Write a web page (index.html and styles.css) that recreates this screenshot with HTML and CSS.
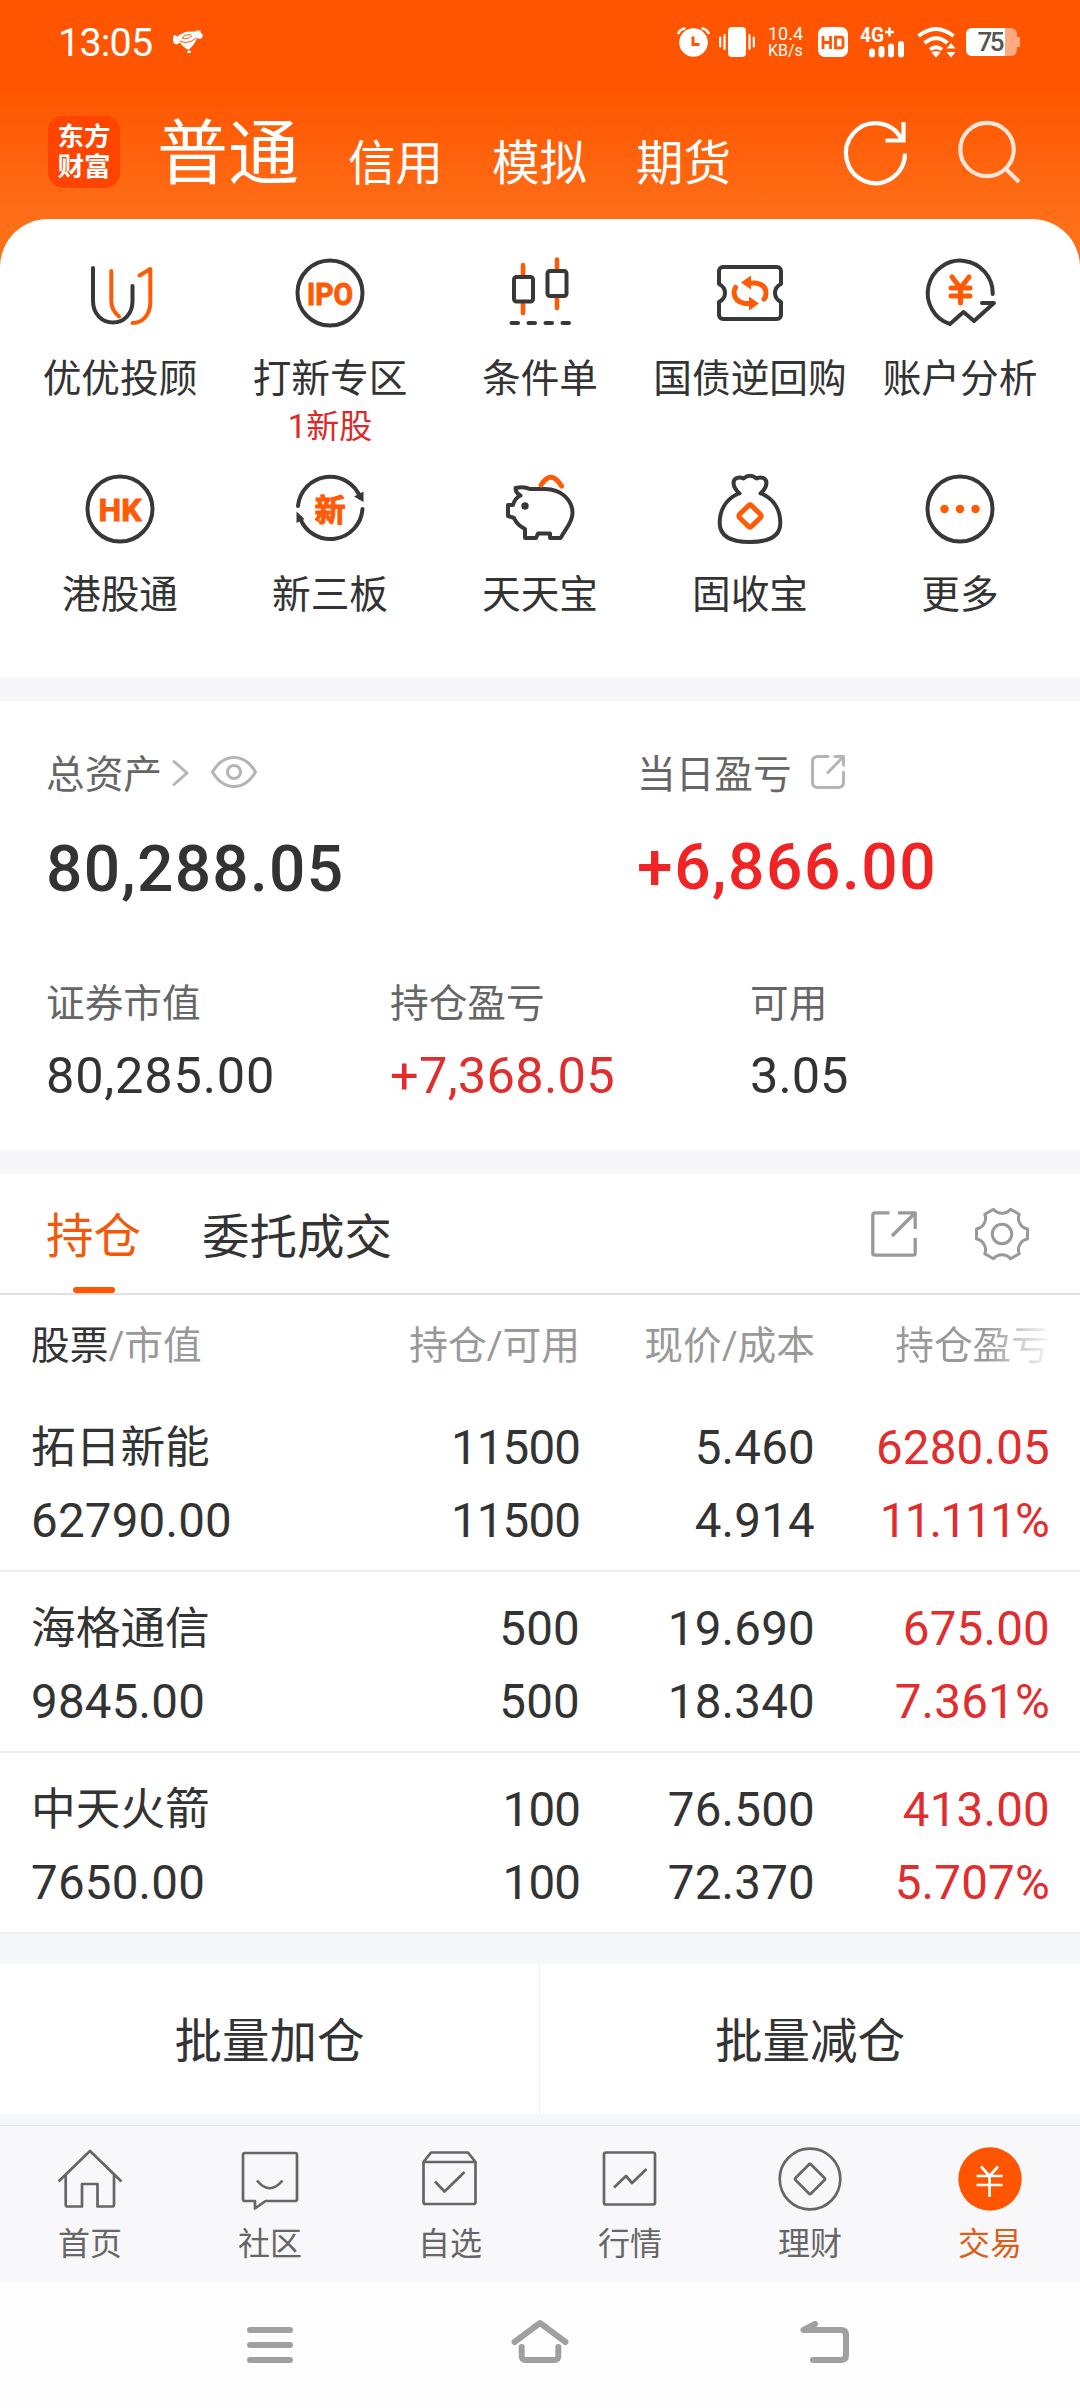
FILE: index.html
```html
<!DOCTYPE html>
<html lang="zh-CN">
<head>
<meta charset="utf-8">
<title>东方财富 - 交易</title>
<link rel="stylesheet" href="styles.css">
</head>
<body>
<div class="hero">
  <div class="status">
    <span class="clock">13:05</span>
    <svg class="notice" width="30" height="24" viewBox="0 0 30 24"><path fill="#fff" d="M0 7l1-2 2 0 1 2Q9 2 16 1.500l7 0 1-1.500 2 1 1-1 1 3 2 2-1 3-2 1-3-1Q22 14 17 18.500l-1 1.500 2 1v2h-4l1-3Q9 16 7 12.500l-3 2-3-1-1-3z"/><path d="M9 8q2-3.500 8-3.500 3 1.500-1 3.500-5 1.500-7 0M7 11q8 4 16-3M14 20h4" fill="none" stroke="#ff5a05" stroke-width="1"/></svg>
    <div class="status-right">
      <svg width="33" height="30" viewBox="0 0 33 30"><circle cx="16.500" cy="15.500" r="14.300" fill="#fff"/><path d="M1.500 6Q3 2.500 7.500 1.500M31.500 6Q30 2.500 25.500 1.500" fill="none" stroke="#fff" stroke-width="2.600" stroke-linecap="round"/><path d="M16 9.500V17.500H22.500" fill="none" stroke="#ff5500" stroke-width="3"/></svg>
      <svg class="vibrate" width="36" height="30" viewBox="0 0 36 30"><rect x="9" width="18" height="30" rx="4" fill="#fff"/><path d="M1.200 10.500v9M5.500 8v14M30.500 8v14M34.800 10.500v9" stroke="#fff" stroke-width="2.200" stroke-linecap="round"/></svg>
      <span class="speed"><span>10.4</span><span class="unit">KB/s</span></span>
      <svg class="hd" width="30" height="30" viewBox="0 0 30 30"><rect width="30" height="30" rx="7" fill="#fff"/><path d="M5 9v13M12.500 9v13M5 15.500h7.500M17.500 10.200h5.500q2 0 2 2v6.600q0 2-2 2h-5.500z" fill="none" stroke="#ff5500" stroke-width="2.800"/></svg>
      <svg class="signal" width="45" height="31" viewBox="0 0 45 31"><text class="net" x="0" y="15" textLength="24" lengthAdjust="spacingAndGlyphs">4G</text><path d="M25 5h9M29.500 .5v9" stroke="#fff" stroke-width="2.600"/><path d="M12 24.500v3M21.500 22v5.500M31 19.500v8M41 17v10.500" stroke="#fff" stroke-width="6" stroke-linecap="round"/></svg>
      <svg class="wifi" width="39" height="31" viewBox="0 0 39 31"><path d="M1.500 9Q19 -5 36.500 9M7.500 16Q19 6.500 30.500 16M13 22.500Q19 18 25 22.500" fill="none" stroke="#fff" stroke-width="4"/><path d="M14.500 25.500Q19 22.500 23.500 25.500L19 30.500zM29.500 21.500L34 16l4.500 5.500zM29.500 25L34 30.500l4.500-5.500z" fill="#fff"/></svg>
      <svg class="battery" width="54" height="28" viewBox="0 0 54 28"><rect width="51" height="28" rx="6" fill="#ffa982"/><path d="M51 9h3v10h-3z" fill="#ffa982"/><path d="M6 0H39V28H6a6 6 0 0 1-6-6V6a6 6 0 0 1 6-6" fill="#fff"/><text class="charge" x="11.500" y="23" textLength="27">75</text></svg>
    </div>
  </div>
  <div class="header">
    <div class="logo"><span>东方</span><span>财富</span></div>
    <div class="modes"><span class="mode-active">普通</span><span>信用</span><span>模拟</span><span>期货</span></div>
    <svg class="refresh" width="64" height="66" viewBox="0 0 64 66" fill="none" stroke="#fff" stroke-width="4.200"><path d="M60 34.500A29.500 30 0 1 1 56.500 20"/><path d="M58.500 3V21.500H40.500"/></svg>
    <svg class="search" width="64" height="66" viewBox="0 0 64 66" fill="none" stroke="#ffe6d8" stroke-width="4.200"><circle cx="29" cy="30.500" r="26.700"/><path d="M47.500 49.500L61 63"/></svg>
  </div>
</div>

<div class="panel">
  <div class="apps">
    <div class="app"><svg class="ic" viewBox="0 0 72 72"><path d="M9 11V44C9 57 18 65.500 29 65.500S48.500 57 48.500 44V29"/><path class="or" d="M27.300 14V44Q27.300 53 35 59.500M48.500 66C60 66 66.300 56 66.300 45V12L55.500 18.500"/></svg><span class="name">优优投顾</span></div>
    <div class="app"><svg class="ic" viewBox="0 0 72 72"><circle cx="36" cy="36" r="32.500"/><text class="badge-text" x="13" y="47.500" textLength="46" lengthAdjust="spacingAndGlyphs">IPO</text></svg><span class="name">打新专区</span><span class="tip">1新股</span></div>
    <div class="app"><svg class="ic" viewBox="0 0 72 72"><path class="or wick" d="M19 8V18M19 46V56M53 2.500V12M53 41V51"/><rect x="10" y="20" width="19" height="24.500" rx="2.500"/><rect x="43.500" y="14" width="19" height="25" rx="2.500"/><path d="M7.500 66h6.500M24.500 66H31M41.500 66H48M58.500 66H65"/></svg><span class="name">条件单</span></div>
    <div class="app"><svg class="ic" viewBox="0 0 72 72"><path d="M9 10H63a4 4 0 0 1 4 4V27Q61 30 61 36T67 45V58a4 4 0 0 1-4 4H9a4 4 0 0 1-4-4V45Q11 42 11 36T5 27V14a4 4 0 0 1 4-4z"/><path class="or loop" d="M35 26H41Q52 27 52 36.500Q52 40 50 42M21.500 30.500Q20 33 20 36Q21 45 31 46.500H37"/><path class="orf" d="M27 25.500l10-7v14zM45 46.500l-10-7v14z"/></svg><span class="name">国债逆回购</span></div>
    <div class="app"><svg class="ic" viewBox="0 0 72 72"><path d="M68.700 37A32.500 32.500 0 1 0 26 67L39.500 55L50 64L70 46H58"/><path class="or loop" d="M28 20L36.500 31L45 20M36.500 31V46M27 31H46M27 39H46"/></svg><span class="name">账户分析</span></div>
    <div class="app"><svg class="ic" viewBox="0 0 72 72"><circle cx="36" cy="36" r="32.500"/><text class="badge-text" x="14.500" y="47.500" textLength="43" lengthAdjust="spacingAndGlyphs">HK</text></svg><span class="name">港股通</span></div>
    <div class="app"><svg class="ic" viewBox="0 0 72 72"><path d="M4 33A32.300 32.300 0 0 1 66.500 25M68.500 36A32.300 32.300 0 0 1 6 45"/><path class="dkf" d="M60 23.500L69.500 18.500V29zM2.500 38.500L10.500 46L2.500 50z"/><text class="badge-cn" x="20.500" y="47.500">新</text></svg><span class="name">新三板</span></div>
    <div class="app"><svg class="ic" viewBox="0 0 72 72"><path d="M11.500 15Q20 13 26 16H41C57 16 68.500 27 68.500 40C68.500 50 61 56 56.700 65H46V60.500H34L32 65H21V56Q13 52 10 45L4 43V32H9Q11 25 16.500 22.500Q11.500 20 11.500 15z"/><circle class="dkf" cx="21" cy="33" r="3.700"/><path class="or loop" d="M37 12Q47-4 57.500 13"/></svg><span class="name">天天宝</span></div>
    <div class="app"><svg class="ic" viewBox="0 0 72 72"><path d="M24.500 20.500C12 26 5.700 37 5.700 50C5.700 65 20 69 36 69S66.300 65 66.300 50C66.300 37 60 26 47.500 20.500M25.500 20.500Q19.500 15 19.500 9.500C20 4 26 4 29.500 5.500Q36 0 42.500 5.500C46 4 52 4 52.500 9.500Q52.500 15 46.500 20.500"/><rect class="or loop" x="27.500" y="34.500" width="17" height="17" rx="2" transform="rotate(45 36 43)"/></svg><span class="name">固收宝</span></div>
    <div class="app"><svg class="ic" viewBox="0 0 72 72"><circle cx="36" cy="36" r="32.500"/><g class="orf"><circle cx="20.500" cy="36" r="4.200"/><circle cx="36" cy="36" r="4.200"/><circle cx="51.500" cy="36" r="4.200"/></g></svg><span class="name">更多</span></div>
  </div>
</div>

<div class="assets">
  <div class="totals">
    <div><div class="label">总资产<svg class="chev" width="17" height="26" viewBox="0 0 17 26"><path d="M2 1.500L15 13L2 24.500"/></svg><svg class="eye" width="46" height="32" viewBox="0 0 46 32"><path d="M1.500 16Q10 1.500 23 1.500T44.500 16Q36 30.500 23 30.500T1.500 16z"/><circle cx="23" cy="16" r="6.500"/></svg></div><div class="big">80,288.05</div></div>
    <div><div class="label">当日盈亏<svg class="out" width="34" height="34" viewBox="0 0 34 34"><path d="M17 1.500H7Q1.500 1.500 1.500 7V27Q1.500 32.500 7 32.500H27Q32.500 32.500 32.500 27V17M24 1.500H32.500V10M32 2L17 17.500"/></svg></div><div class="big gain">+6,866.00</div></div>
  </div>
  <div class="details">
    <div><div class="label">证券市值</div><div class="mid">80,285.00</div></div>
    <div><div class="label">持仓盈亏</div><div class="mid red">+7,368.05</div></div>
    <div><div class="label">可用</div><div class="mid short">3.05</div></div>
  </div>
</div>

<div class="holdings">
  <div class="tabs">
    <span class="tab on">持仓</span><span class="tab">委托成交</span>
    <svg class="share" width="46" height="46" viewBox="0 0 46 46"><path d="M18.500 1.800H4Q1.800 1.800 1.800 4V42Q1.800 44.200 4 44.200H42Q44.200 44.200 44.200 42V27M27 1.800H44.200V18M43 3L21 25"/></svg>
    <svg class="gear" width="56" height="56" viewBox="-28 -28 56 56"><path d="M25.500 5A11 11 0 0 0 17.200 19.800L8.500 24.800A11 11 0 0 0-8.500 24.800L-17.200 19.800A11 11 0 0 0-25.500 5V-5A11 11 0 0 0-17.200-19.800L-8.500-24.800A11 11 0 0 0 8.500-24.800L17.200-19.800A11 11 0 0 0 25.500-5z"/><circle r="9.700"/></svg>
  </div>
  <div class="cols head"><span><b>股票</b>/市值</span><span>持仓/可用</span><span>现价/成本</span><span class="fade">持仓盈亏</span></div>
  <div class="cols row"><span>拓日新能</span><span class="tight">11500</span><span>5.460</span><span>6280.05</span><span>62790.00</span><span class="tight">11500</span><span>4.914</span><span class="tighter">11.111%</span></div>
  <div class="cols row"><span>海格通信</span><span>500</span><span>19.690</span><span>675.00</span><span>9845.00</span><span>500</span><span>18.340</span><span>7.361%</span></div>
  <div class="cols row"><span>中天火箭</span><span class="tight">100</span><span>76.500</span><span>413.00</span><span>7650.00</span><span class="tight">100</span><span>72.370</span><span>5.707%</span></div>
</div>

<div class="batch"><span>批量加仓</span><span>批量减仓</span></div>

<div class="nav">
  <div class="item"><svg viewBox="0 0 72 72"><path d="M4.500 38.500L36 8L67.500 38.500M11.700 32V61.500Q11.700 63.500 13.500 63.500H28V41H43.500V63.500H58Q60 63.500 60 61.500V32"/></svg><span>首页</span></div>
  <div class="item"><svg viewBox="0 0 72 72"><path d="M11 10H61Q63 10 63 12V56Q63 58 61 58H31.500L21 65.500V58H11Q9 58 9 56V12Q9 10 11 10zM23 37.500Q35.500 53 48.500 37.500"/></svg><span>社区</span></div>
  <div class="item"><svg viewBox="0 0 72 72"><path d="M9.500 19L17 9.500H54L61.500 19V59Q61.500 61 59.500 61H11.500Q9.500 61 9.500 59zM9.500 19H61.500M21 38.500L30.500 48.500L50.500 29"/></svg><span>自选</span></div>
  <div class="item"><svg viewBox="0 0 72 72"><rect x="10" y="9.500" width="51" height="52" rx="2"/><path d="M20 44.500L32 33L38 40L52.500 26"/></svg><span>行情</span></div>
  <div class="item"><svg viewBox="0 0 72 72"><circle cx="36" cy="36" r="30.300"/><rect x="25" y="25" width="22" height="22" rx="1.500" transform="rotate(45 36 36)"/></svg><span>理财</span></div>
  <div class="item active"><svg viewBox="0 0 72 72"><circle class="coin" cx="36" cy="36" r="31.700"/><path class="yen" d="M27 23.500L35.500 33L44 23.500M35.500 33V54M22.500 33H48.500M22.500 42H48.500"/></svg><span>交易</span></div>
</div>

<div class="keys">
  <svg width="60" height="60" viewBox="0 0 60 60"><path d="M10 15H50M10 30H50M10 45H50"/></svg>
  <svg width="60" height="60" viewBox="0 0 60 60"><path d="M4.500 27L30 8L55.500 27M11.700 32V41Q11.700 45 15.700 45H44.300Q48.300 45 48.300 41V32"/></svg>
  <svg width="60" height="60" viewBox="0 0 60 60"><path d="M20 9L8.500 15H46Q51 15 51 20V40Q51 45 46 45H18"/></svg>
</div>
</body>
</html>
```
FILE: styles.css
```css
* { box-sizing: border-box; }
body {
  margin: 0;
  width: 1080px;
  background: #fff;
  color: #333;
  font-family: Roboto, "Noto Sans CJK SC", sans-serif;
  font-size: 38.700px;
}
svg { display: block; flex: none; overflow: visible; }

.hero {
  height: 270px;
  background: linear-gradient(#ff5500 90px, #ff6f18 222px);
  color: #fff;
}
.status { display: flex; align-items: center; height: 84px; padding: 0 60px 0 58px; }
.clock { font-size: 39.500px; letter-spacing: -0.800px; }
.notice { margin-left: 21px; }
.status-right { display: flex; align-items: center; margin-left: auto; }
.vibrate { margin-left: 9px; }
.speed { display: flex; flex-direction: column; width: 36px; margin-left: 13px; font-size: 18px; line-height: 17px; }
.speed .unit { font-size: 16px; line-height: 17px; }
.hd { margin-left: 14px; }
.signal, .wifi { margin-left: 12px; }
.battery { margin-left: 10px; }
.net { font-size: 21px; font-weight: 700; fill: #fff; }
.charge { font-size: 26px; font-weight: 500; fill: #555; }

.header { display: flex; align-items: center; height: 135px; padding: 0 58px 0 48px; }
.logo {
  display: flex;
  flex-direction: column;
  justify-content: center;
  width: 72px;
  height: 72px;
  border-radius: 15px;
  background: #ff4400;
  text-align: center;
  font-size: 26.500px;
  font-weight: 700;
  line-height: 30px;
}
.modes { display: flex; align-items: baseline; margin: 13px 0 0 37px; font-size: 47.500px; }
.modes span { position: relative; top: 2px; line-height: 72px; margin-left: 49px; }
.modes .mode-active { top: 0; margin-left: 0; font-size: 71px; }
.refresh { margin-left: auto; }
.search { margin-left: 49px; }

.panel {
  height: 458px;
  margin-top: -51px;
  padding: 38px 15px 0;
  border-radius: 48px 48px 0 0;
  background: #fff;
}
.apps { display: grid; grid-template-columns: repeat(5, 210px); grid-auto-rows: 216px; }
.app { display: flex; flex-direction: column; align-items: center; white-space: nowrap; }
.ic { width: 72px; height: 72px; fill: none; stroke: #383838; stroke-width: 4; stroke-linecap: round; stroke-linejoin: round; }
.ic .or { stroke: #ff5a05; }
.ic .wick { stroke-width: 4.600; }
.ic .loop { stroke-width: 5; }
.ic .orf { fill: #ff5a05; stroke: none; }
.ic .dkf { fill: #383838; stroke: none; }
.ic text { fill: #ff5a05; stroke: #ff5a05; stroke-width: 1; }
.badge-text { font-size: 32px; font-weight: 700; }
.badge-cn { font-family: "Noto Sans CJK SC", sans-serif; font-size: 31px; font-weight: 700; }
.name { margin-top: 28px; line-height: 44px; }
.tip { margin-top: 8px; font-size: 33px; line-height: 36px; color: #dc2a2a; }

.assets {
  height: 497px;
  padding: 45px 0 0 46px;
  border-top: 24px solid #f7f7fa;
  border-bottom: 24px solid #f7f7fa;
}
.totals { display: grid; grid-template-columns: 591px 1fr; }
.label { display: flex; align-items: center; height: 50px; color: #666; }
.label svg { fill: none; stroke: #b5b5b5; stroke-width: 3; stroke-linecap: round; stroke-linejoin: round; }
.chev { margin: 3px 0 0 10px; }
.eye { margin: 2px 0 0 22px; }
.out { margin: 2px 0 0 19px; }
.big { margin-top: 39px; font-size: 64px; font-weight: 500; line-height: 70px; letter-spacing: 1.300px; }
.gain { margin-top: 37px; letter-spacing: 1.600px; color: #f02424; }
.details { display: grid; grid-template-columns: 344px 360px 1fr; margin-top: 70px; }
.mid { margin-top: 21px; font-size: 50.500px; line-height: 60px; letter-spacing: 0.800px; }
.red { letter-spacing: 0.300px; color: #e02d2d; }
.short { letter-spacing: 0; }

.tabs { display: flex; align-items: center; height: 121px; padding: 0 50px 0 46px; border-bottom: 2px solid #e0e0e0; font-size: 47.500px; }
.tab { display: flex; align-items: center; height: 119px; margin-right: 61px; }
.on { flex-direction: column; color: #f2590a; line-height: 127px; }
.on::after { content: ""; flex: none; width: 42px; height: 6px; margin-top: -14px; border-radius: 3px; background: #ff5500; }
.share { margin-left: auto; }
.gear { margin-left: 57px; }
.share, .gear { fill: none; stroke: #999; stroke-width: 3; stroke-linejoin: round; }
.share { stroke-width: 3.300; }

.cols { display: grid; grid-template-columns: 280px 269px 235px 235px; padding-left: 31px; text-align: right; white-space: nowrap; }
.cols span:nth-child(4n + 1) { text-align: left; }
.head { height: 96px; line-height: 101px; color: #999; }
.head b { font-weight: 400; color: #333; }
.fade { background: linear-gradient(90deg, #999 170px, #fff 240px); background-clip: text; -webkit-background-clip: text; color: transparent; }
.row { height: 181px; padding-top: 21px; border-bottom: 2px solid #eee; line-height: 73px; font-size: 47.500px; letter-spacing: 0.200px; grid-auto-rows: 73px; }
.row span:nth-child(4n) { color: #e02d2d; }
.row span:first-child { font-size: 44.700px; letter-spacing: 0; }
.row .tight { letter-spacing: -0.900px; }
.row .tighter { padding-right: 2px; letter-spacing: -1.800px; }

.batch { display: grid; grid-template-columns: 1fr 1fr; height: 191px; border-top: 30px solid #f6f7fa; border-bottom: 11px solid #f6f7fa; font-size: 47.500px; line-height: 156px; text-align: center; }
.batch span { height: 150px; }
.batch span:first-child { border-right: 1px solid #eee; }

.nav { display: grid; grid-template-columns: repeat(6, 180px); height: 157px; padding-top: 17px; border-top: 1px solid #e0e2e4; background: #f8f8fa; color: #666; font-size: 32px; line-height: 36px; }
.item { display: flex; flex-direction: column; align-items: center; gap: 11px; }
.item svg { width: 72px; height: 72px; fill: none; stroke: #666; stroke-width: 2.700; stroke-linejoin: round; }
.active { color: #dc5f19; }
.item .coin { fill: #ff5500; stroke: none; }
.item .yen { stroke: #fff; }

.keys { display: grid; grid-template-columns: 270px 285px 60px; height: 126px; padding: 33px 0 0 240px; background: #fefefe; }
.keys svg { fill: none; stroke: #a0a0a0; stroke-width: 6; stroke-linecap: round; stroke-linejoin: round; }
```
